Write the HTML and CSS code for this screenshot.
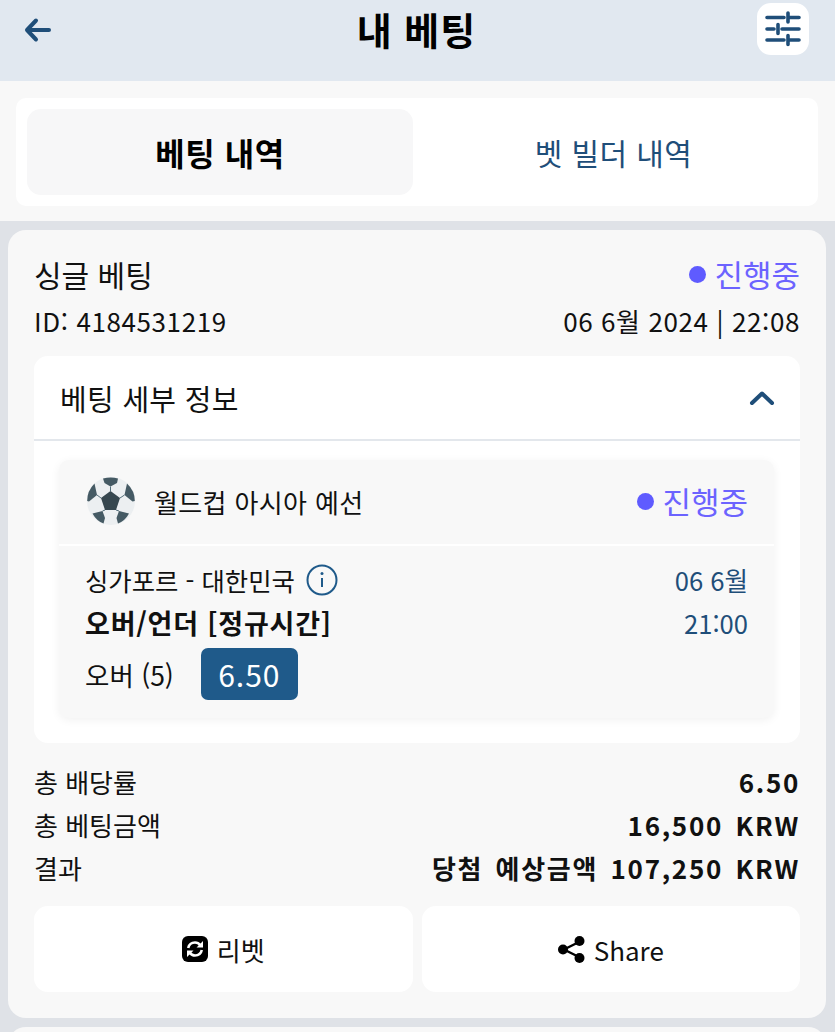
FILE: index.html
```html
<!DOCTYPE html>
<html lang="ko">

<head>
    <meta charset="UTF-8">
    <meta name="viewport" content="width=device-width, initial-scale=1.0">
    <title>내 베팅</title>
    <link rel="stylesheet" href="styles.css">
</head>

<body>
    <header class="topbar">
        <div class="back-btn">
            <svg viewBox="0 0 28 28" width="28" height="28">
                <path d="M12 4.500 3 14l9 9.500M3.500 14H25" fill="none" stroke="#1f4e79" stroke-width="4" stroke-linecap="round" stroke-linejoin="round" />
            </svg>
        </div>
        <h1>내 베팅</h1>
        <div class="filter-btn">
            <svg viewBox="0 0 36 36" width="36" height="36">
                <g fill="none" stroke="#1f4e79" stroke-width="3.600" stroke-linecap="round">
                    <path d="M2 6.500h17M23 6.500h11M23 2v9" />
                    <path d="M2 18h7M17 18h17M13 13.500v9" />
                    <path d="M2 29h17M23 29h11M23 24.500v9" />
                </g>
            </svg>
        </div>
    </header>

    <section class="tabs-wrap">
        <div class="tabs">
            <div class="tab active">베팅 내역</div>
            <div class="tab">벳 빌더 내역</div>
        </div>
    </section>

    <main class="bet-card">
        <div class="row">
            <span class="bet-type">싱글 베팅</span>
            <span class="status"><i class="dot"></i>진행중</span>
        </div>
        <div class="row meta">
            <span>ID: 4184531219</span>
            <span>06 6월 2024 | 22:08</span>
        </div>

        <div class="details">
            <div class="details-head">
                <span>베팅 세부 정보</span>
                <svg viewBox="0 0 26 16" width="26" height="16">
                    <path d="M3 13 13 3.500 23 13" fill="none" stroke="#1f4e79" stroke-width="4" stroke-linecap="round" stroke-linejoin="round" />
                </svg>
            </div>
            <div class="selection">
                <div class="league">
                    <div class="league-name">
                        <svg class="ball" viewBox="0 0 48 48" width="48" height="48">
                            <circle cx="24" cy="24" r="24" fill="#eceff1" />
                            <path d="M23.500 14 33 21 29 33H18L14 21z" fill="#37474f" />
                            <path d="M16 1.500Q24-.5 31 1.500L30 6 23.500 9.500 17.500 6z" fill="#455a64" />
                            <path d="M7.500 6.500 10 18 2 24.500 .2 24Q0 14 7.500 6.500z" fill="#455a64" />
                            <path d="M40 6.500 37.500 18 45.500 24.500 47.800 24Q48 14 40 6.500z" fill="#455a64" />
                            <path d="M5.500 36.500 15.500 34 18 41 16.500 46.500Q9.500 44 5.500 36.500z" fill="#455a64" />
                            <path d="M42 36.500 32 34 29.500 41 31 46.500Q38 44 42 36.500z" fill="#455a64" />
                            <path d="M23.500 14V9.500M33 21l4.500-3M14 21l-4-3M29 33l3 1M18 33l-2.500 1" stroke="#546e7a" stroke-width="1" />
                        </svg>
                        <span>월드컵 아시아 예선</span>
                    </div>
                    <span class="status"><i class="dot"></i>진행중</span>
                </div>
                <div class="match">
                    <div class="match-info">
                        <div class="teams">
                            <span>싱가포르 - 대한민국</span>
                            <svg viewBox="0 0 32 32" width="32" height="32">
                                <circle cx="16" cy="16" r="14.500" fill="none" stroke="#1f5a8a" stroke-width="2" />
                                <path d="M16 14v9" stroke="#1f5a8a" stroke-width="2" />
                                <circle cx="16" cy="9.500" r="1.500" fill="#1f5a8a" />
                            </svg>
                        </div>
                        <div class="market">오버/언더 [정규시간]</div>
                        <div class="pick">
                            <span>오버 (5)</span>
                            <span class="odds">6.50</span>
                        </div>
                    </div>
                    <div class="match-time">
                        <span>06 6월</span>
                        <span>21:00</span>
                    </div>
                </div>
            </div>
        </div>

        <dl class="summary">
            <div class="row"><dt>총 배당률</dt><dd>6.50</dd></div>
            <div class="row"><dt>총 베팅금액</dt><dd>16,500 KRW</dd></div>
            <div class="row"><dt>결과</dt><dd>당첨 예상금액 107,250 KRW</dd></div>
        </dl>

        <div class="actions">
            <div class="action">
                <svg viewBox="0 0 26 26" width="26" height="26">
                    <rect width="26" height="26" rx="6" fill="#000" />
                    <path d="M6.200 12C7 8.500 9.500 6.500 13 6.500c2.300 0 4 1 5.200 2.600M19.800 14c-.8 3.500-3.300 5.500-6.800 5.500-2.300 0-4-1-5.200-2.600" fill="none" stroke="#fff" stroke-width="2.600" />
                    <path d="M21 5v6.500h-6.500zM5 21v-6.500h6.500z" fill="#fff" />
                </svg>
                <span>리벳</span>
            </div>
            <div class="action">
                <svg viewBox="0 0 27 27" width="27" height="27">
                    <path d="M21 6 6 13.500 21 21" fill="none" stroke="#000" stroke-width="2.400" />
                    <circle cx="21.500" cy="5" r="5" />
                    <circle cx="5" cy="13.500" r="5" />
                    <circle cx="21.500" cy="22" r="5" />
                </svg>
                <span>Share</span>
            </div>
        </div>
    </main>

    <div class="next-card"></div>
</body>

</html>
```

FILE: styles.css
```css
html,
body {
    height: 100%;
}

body {
    margin: 0;
    padding: 0;
    overflow: hidden;
    font-family: "Noto Sans CJK KR", "Noto Sans", sans-serif;
    color: #111;
    background: #dfe2e7;
}

.topbar {
    height: 81px;
    box-sizing: border-box;
    display: flex;
    justify-content: space-between;
    align-items: flex-start;
    padding: 3px 26px 0 24px;
    background: #e1e8f0;
}

.topbar h1 {
    margin: 0;
    font-size: 38px;
    line-height: 52px;
    font-weight: 700;
    letter-spacing: 1px;
    color: #000;
}

.back-btn {
    width: 52px;
    padding-top: 13px;
}

.back-btn svg {
    display: block;
}

.filter-btn {
    width: 52px;
    height: 52px;
    display: flex;
    align-items: center;
    justify-content: center;
    background: #fff;
    border-radius: 14px;
}

.tabs-wrap {
    height: 140px;
    box-sizing: border-box;
    padding: 17px 17px 15px 16px;
    background: #f8f8f8;
}

.tabs {
    height: 108px;
    box-sizing: border-box;
    display: flex;
    padding: 11px;
    background: #fff;
    border-radius: 10px;
}

.tab {
    flex: 1;
    display: flex;
    align-items: center;
    justify-content: center;
    padding-left: 7px;
    font-size: 30px;
    letter-spacing: 0.4px;
    color: #1f4e79;
}

.tab.active {
    flex: 0 0 386px;
    padding-left: 0;
    font-size: 32px;
    letter-spacing: 0.6px;
    font-weight: 700;
    color: #000;
    background: #f7f7f8;
    border-radius: 14px;
}

.bet-card {
    height: 788px;
    box-sizing: border-box;
    margin: 9px 9px 0 8px;
    padding: 22px 26px 0;
    background: #f8f8f8;
    border-radius: 18px;
}

.row {
    display: flex;
    justify-content: space-between;
    align-items: center;
}

.bet-type {
    font-size: 30px;
    line-height: 44px;
}

.status {
    display: flex;
    align-items: center;
    font-size: 31px;
    line-height: 44px;
    color: #6c63ff;
}

.dot {
    width: 17px;
    height: 17px;
    margin-right: 8px;
    border-radius: 50%;
    background: #5f5bff;
}

.meta {
    margin-top: 6px;
    font-size: 26px;
    line-height: 38px;
    letter-spacing: 0.6px;
}

.details {
    margin-top: 16px;
    padding-bottom: 25px;
    background: #fff;
    border-radius: 14px;
}

.details-head {
    height: 85px;
    box-sizing: border-box;
    display: flex;
    justify-content: space-between;
    align-items: center;
    padding: 0 25px 0 26px;
    font-size: 29px;
    letter-spacing: 0.3px;
    border-bottom: 2px solid #e3e7ec;
}

.selection {
    margin: 19px 26px 0 25px;
    background: #f8f8f8;
    border-radius: 10px;
    box-shadow: 0 2px 10px rgba(0, 0, 0, 0.06);
}

.league {
    height: 86px;
    box-sizing: border-box;
    display: flex;
    justify-content: space-between;
    align-items: center;
    padding: 0 26px 2px 28px;
    border-bottom: 2px solid #fff;
}

.league-name {
    display: flex;
    align-items: center;
    gap: 19px;
    font-size: 26px;
    letter-spacing: 0.35px;
}

.match {
    display: flex;
    justify-content: space-between;
    padding: 14px 26px 18px 26px;
}

.teams {
    display: flex;
    align-items: center;
    gap: 11px;
    height: 40px;
    font-size: 25.400px;
}

.market {
    margin-top: 1px;
    font-size: 27px;
    line-height: 44px;
    font-weight: 700;
    letter-spacing: 0.8px;
}

.pick {
    display: flex;
    align-items: center;
    gap: 27px;
    margin-top: 3px;
    font-size: 26.500px;
}

.odds {
    width: 97px;
    height: 52px;
    display: flex;
    align-items: center;
    justify-content: center;
    font-size: 30px;
    letter-spacing: 1px;
    color: #fff;
    background: #1f5a8a;
    border-radius: 7px;
}

.match-time {
    display: flex;
    flex-direction: column;
    align-items: flex-end;
    gap: 3px;
    font-size: 25.600px;
    line-height: 40px;
    color: #1f4e79;
}

.summary {
    margin: 17px 0 0;
}

.summary .row {
    height: 43px;
    font-size: 26px;
}

.summary dd {
    margin: 0;
    font-weight: 700;
    letter-spacing: 1.700px;
    word-spacing: 3.500px;
}

.actions {
    display: flex;
    gap: 9px;
    margin-top: 17px;
}

.action {
    flex: 1;
    height: 86px;
    display: flex;
    align-items: center;
    justify-content: center;
    gap: 9px;
    font-size: 26px;
    background: #fff;
    border-radius: 14px;
}

.next-card {
    height: 20px;
    margin: 9px 9px 0 8px;
    background: #f8f8f8;
    border-radius: 18px 18px 0 0;
}
```
